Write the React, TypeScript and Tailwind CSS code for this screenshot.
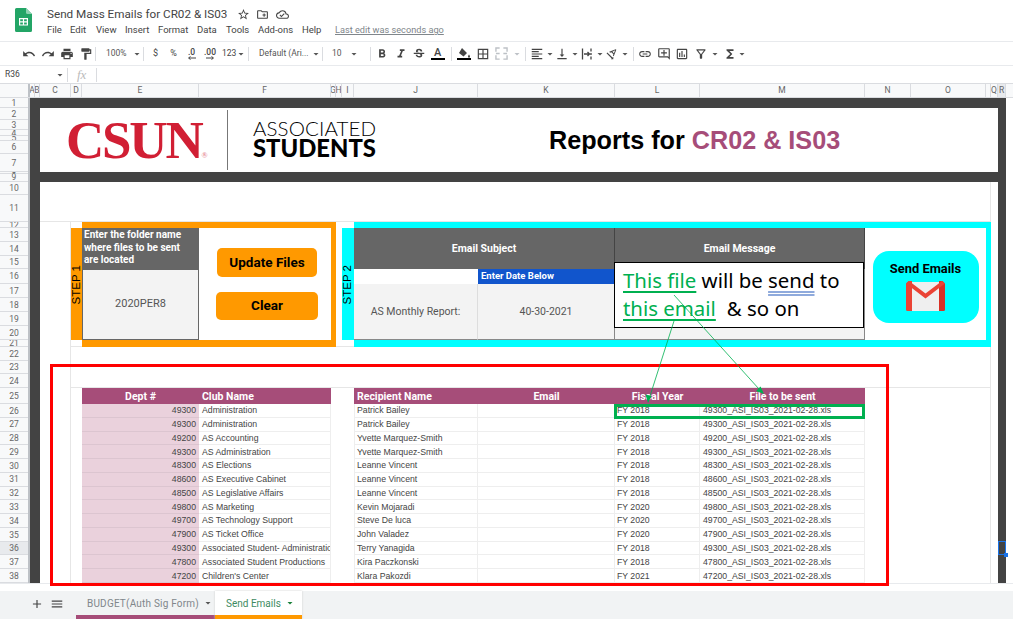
import {
  MdAdd,
  MdArrowDropDown,
  MdFormatAlignLeft,
  MdFormatBold,
  MdFormatItalic,
  MdFormatPaint,
  MdFunctions,
  MdLink,
  MdMenu,
  MdOutlineAddComment,
  MdOutlineBorderAll,
  MdOutlineCloudDone,
  MdOutlineCreateNewFolder,
  MdOutlineFilterAlt,
  MdOutlineInsertChart,
  MdPrint,
  MdRedo,
  MdStarBorder,
  MdStrikethroughS,
  MdTextRotationAngledown,
  MdUndo,
  MdVerticalAlignBottom,
} from 'react-icons/md';

const menu = [
  { label: 'File', width: 'w-[23px]' },
  { label: 'Edit', width: 'w-[26px]' },
  { label: 'View', width: 'w-[29px]' },
  { label: 'Insert', width: 'w-[33px]' },
  { label: 'Format', width: 'w-[39px]' },
  { label: 'Data', width: 'w-[29px]' },
  { label: 'Tools', width: 'w-[32px]' },
  { label: 'Add-ons', width: 'w-[44px]' },
  { label: 'Help', width: 'w-[33px]' },
];

const columns = [
  { label: 'A', width: 'w-[5px]' },
  { label: 'B', width: 'w-[5px]' },
  { label: 'C', width: 'w-[31px]' },
  { label: 'D', width: 'w-[11px]' },
  { label: 'E', width: 'w-[117px]' },
  { label: 'F', width: 'w-[132px]' },
  { label: 'G', width: 'w-[5px]' },
  { label: 'H', width: 'w-[6px]' },
  { label: 'I', width: 'w-[12px]' },
  { label: 'J', width: 'w-[124px]' },
  { label: 'K', width: 'w-[137px]' },
  { label: 'L', width: 'w-[85px]' },
  { label: 'M', width: 'w-[165px]' },
  { label: 'N', width: 'w-[46px]' },
  { label: 'O', width: 'w-[75px]' },
  { label: '', width: 'w-[5px]' },
  { label: 'Q', width: 'w-[7px]' },
  { label: 'R', width: 'w-[8px]' },
];

const rows = [
  { dept: 49300, club: 'Administration', name: 'Patrick Bailey', year: 'FY 2018' },
  { dept: 49300, club: 'Administration', name: 'Patrick Bailey', year: 'FY 2018' },
  { dept: 49200, club: 'AS Accounting', name: 'Yvette Marquez-Smith', year: 'FY 2018' },
  { dept: 49300, club: 'AS Administration', name: 'Yvette Marquez-Smith', year: 'FY 2018' },
  { dept: 48300, club: 'AS Elections', name: 'Leanne Vincent', year: 'FY 2018' },
  { dept: 48600, club: 'AS Executive Cabinet', name: 'Leanne Vincent', year: 'FY 2018' },
  { dept: 48500, club: 'AS Legislative Affairs', name: 'Leanne Vincent', year: 'FY 2018' },
  { dept: 49800, club: 'AS Marketing', name: 'Kevin Mojaradi', year: 'FY 2020' },
  { dept: 49700, club: 'AS Technology Support', name: 'Steve De luca', year: 'FY 2020' },
  { dept: 47900, club: 'AS Ticket Office', name: 'John Valadez', year: 'FY 2020' },
  { dept: 49300, club: 'Associated Student- Administration', name: 'Terry Yanagida', year: 'FY 2018' },
  { dept: 47800, club: 'Associated Student Productions', name: 'Kira Paczkonski', year: 'FY 2018' },
  { dept: 47200, club: "Children's Center", name: 'Klara Pakozdi', year: 'FY 2021' },
];

const gridCols =
  'grid-cols-[5px_5px_31px_11px_117px_132px_5px_6px_12px_124px_137px_85px_165px_46px_75px_5px_7px_8px]';
const gridRows =
  'grid-rows-[10px_12px_10px_6px_5px_13px_18px_1px_9px_13px_27px_6px_14px_14px_13px_15px_14px_14px_14px_14px_7px_14px_13px_14px_16px_repeat(13,13.77px)]';

function Caret({ className = '' }: { className?: string }) {
  return <MdArrowDropDown className={`shrink-0 text-[12px] text-[#555] ${className}`} />;
}

function Sep({ className = '' }: { className?: string }) {
  return <div className={`h-[14px] w-px shrink-0 bg-[#dadce0] ${className}`} />;
}

function Tool({ children, className = 'w-[19px]' }: { children: React.ReactNode; className?: string }) {
  return <div className={`flex h-full shrink-0 items-center justify-center text-[14px] text-[#444] ${className}`}>{children}</div>;
}

function SheetsLogo() {
  return (
    <svg viewBox="0 0 17 24" className="h-[24px] w-[17px]">
      <path d="M1.5 0H11l6 6v16.5a1.5 1.5 0 0 1-1.5 1.5h-14A1.5 1.5 0 0 1 0 22.500V1.500A1.500 1.500 0 0 1 1.500 0z" fill="#23a566" />
      <path d="M11 0l6 6h-4.500A1.500 1.500 0 0 1 11 4.500z" fill="#8ed1b1" />
      <path d="M4 10h9v7.500H4zm1.200 1.200v2h2.700v-2zm3.900 0v2h2.700v-2zm-3.900 3.200v2h2.700v-2zm3.900 0v2h2.700v-2z" fill="#fff" fillRule="evenodd" />
    </svg>
  );
}

function GmailIcon() {
  return (
    <svg viewBox="0 0 39 30" className="h-[30px] w-[39px]">
      <rect x="2" y="1" width="35" height="29" fill="#efefef" />
      <path d="M0 2.500L2.500 0H6v30H1.500A1.500 1.500 0 0 1 0 28.500z" fill="#ea4335" />
      <path d="M39 2.500L36.500 0H33v30h4.500a1.500 1.500 0 0 0 1.500-1.500z" fill="#d93025" />
      <path d="M0 2.500L3 0l16.500 12.500L36 0l3 2.500-19.500 15z" fill="#ea4335" />
    </svg>
  );
}

// little arrow under the decimal buttons
function DecimalArrow({ flip = false }: { flip?: boolean }) {
  return (
    <svg viewBox="0 0 9 4" className={`-mt-[1px] h-[4px] w-[9px] ${flip ? '-scale-x-100' : ''}`}>
      <path d="M9 2H2M3.500 .5L1.500 2l2 1.500" stroke="#444" strokeWidth="1" fill="none" />
    </svg>
  );
}

function Toolbar() {
  return (
    <div className="flex h-[25px] items-center border-y border-[#e8eaed] pl-[19px] font-['Roboto',sans-serif] text-[8.5px] text-[#555]">
      <Tool><MdUndo /></Tool>
      <Tool><MdRedo /></Tool>
      <Tool><MdPrint /></Tool>
      <Tool><MdFormatPaint /></Tool>
      <Sep />
      <div className="flex w-[47px] shrink-0 items-center pl-[10px]">
        <span className="w-[25px]">100%</span>
        <Caret />
      </div>
      <Sep />
      <Tool className="ml-[2px] w-[19px]">
        <span className="text-[9px]">$</span>
      </Tool>
      <Tool className="w-[17px]">
        <span className="text-[9px]">%</span>
      </Tool>
      <Tool className="w-[19px]">
        <div className="flex flex-col items-center leading-none">
          <span className="text-[8.500px] font-medium leading-[9px]">.0</span>
          <DecimalArrow />
        </div>
      </Tool>
      <Tool className="w-[18px]">
        <div className="flex flex-col items-center leading-none">
          <span className="text-[8.500px] font-medium leading-[9px]">.00</span>
          <DecimalArrow flip />
        </div>
      </Tool>
      <Tool className="w-[26px] !justify-start pl-[3px]">
        <span className="text-[8.500px]">123</span>
        <Caret className="-ml-px" />
      </Tool>
      <Sep className="ml-[3px]" />
      <div className="flex w-[73px] shrink-0 items-center pl-[10px]">
        <span className="w-[52px] whitespace-nowrap">Default (Ari...</span>
        <Caret />
      </div>
      <Sep />
      <div className="flex w-[47px] shrink-0 items-center pl-[9px]">
        <span className="w-[15px]">10</span>
        <Caret className="translate-x-[1px]" />
      </div>
      <Sep />
      <Tool className="ml-[2px] w-[18.5px]"><MdFormatBold /></Tool>
      <Tool className="w-[18.5px]"><MdFormatItalic /></Tool>
      <Tool className="w-[18.5px]"><MdStrikethroughS /></Tool>
      <Tool className="w-[18.5px]">
        <div className="flex flex-col items-center leading-none">
          <span className="text-[11px] font-medium leading-[11px]">A</span>
          <div className="h-[2px] w-[14px] bg-black" />
        </div>
      </Tool>
      <Sep className="ml-[4px]" />
      <Tool className="ml-[2px] w-[19px]">
        <div className="flex flex-col items-center">
          <svg viewBox="0 0 14 11" className="h-[11px] w-[14px]">
            <path d="M5 1l5 5-3.500 3.500L2 6zM12 7.500c.8 1.200 1 1.700 1 2.200a1 1 0 0 1-2 0c0-.5.2-1 1-2.200z" fill="#444" />
          </svg>
          <div className="h-[2px] w-[14px] bg-black" />
        </div>
      </Tool>
      <Tool><MdOutlineBorderAll /></Tool>
      <Tool className="w-[19px] text-[#bdc1c6]">
        <svg viewBox="0 0 14 14" className="h-[13px] w-[13px]" fill="none" stroke="#bdc1c6" strokeWidth="1.500">
          <path d="M1 5V1h4M9 1h4v4M1 9v4h4M9 13h4V9M1 7h4M9 7h4" />
        </svg>
      </Tool>
      <Tool className="w-[12px]"><Caret className="text-[#bdc1c6]" /></Tool>
      <Sep className="ml-[2px]" />
      <div className="flex w-[25px] shrink-0 items-center pl-[4px] text-[14px] text-[#444]"><MdFormatAlignLeft className="shrink-0" /><Caret /></div>
      <div className="flex w-[25px] shrink-0 items-center pl-[4px] text-[14px] text-[#444]"><MdVerticalAlignBottom className="shrink-0" /><Caret /></div>
      <div className="flex w-[25px] shrink-0 items-center pl-[4px] text-[14px] text-[#444]">
        <svg viewBox="0 0 14 14" className="h-[14px] w-[14px] shrink-0" fill="none" stroke="#444" strokeWidth="1.300">
          <path d="M2.500 1.500v11M11 1.500v3M11 6v2M11 9.500v3M4 7h5.500M7.500 5l2 2-2 2" />
        </svg>
        <Caret />
      </div>
      <div className="flex w-[25px] shrink-0 items-center pl-[4px] text-[14px] text-[#444]"><MdTextRotationAngledown className="shrink-0" /><Caret /></div>
      <Sep className="ml-[7px]" />
      <Tool className="ml-[2px] w-[18.5px]"><MdLink /></Tool>
      <Tool className="w-[18.5px]"><MdOutlineAddComment /></Tool>
      <Tool className="w-[18.5px]"><MdOutlineInsertChart /></Tool>
      <Tool className="w-[18.5px]"><MdOutlineFilterAlt /></Tool>
      <Tool className="w-[10px]"><Caret /></Tool>
      <Tool className="ml-[2px] w-[15px]"><MdFunctions /></Tool>
      <Tool className="w-[10px]"><Caret /></Tool>
    </div>
  );
}

function RowHeaders() {
  return (
    <div className={`grid w-[30px] shrink-0 border-r-[2px] border-[#bdc1c6] bg-[#f8f9fa] ${gridRows}`}>
      {Array.from({ length: 38 }, (_, i) => (
        <div
          key={i}
          className={`flex items-center justify-center overflow-hidden border-b border-[#dadce0] pt-px text-[8.5px] leading-none text-[#666] ${
            i === 35 ? 'bg-[#e8eaed]' : ''
          }`}
        >
          {i + 1}
        </div>
      ))}
    </div>
  );
}

function Sheet() {
  return (
    <div className={`grid shrink-0 bg-white ${gridCols} ${gridRows} font-['Liberation_Sans',sans-serif]`}>
      {/* gridlines */}
      <div className="col-[3/4] row-[12/-1] border-r border-[#e6e6e6]" />
      <div className="col-[3/17] row-[11] border-b border-[#e6e6e6]" />
      <div className="col-[4/17] row-[21] border-b border-[#e6e6e6]" />
      <div className="col-[4/17] row-[24] border-b border-[#e6e6e6]" />
      <div className="col-[16] row-[10/-1] border-r border-[#e6e6e6]" />

      {/* dark frame */}
      <div className="col-[1/3] row-[1/-1] bg-[#434343]" />
      <div className="col-[18] row-[1/-1] bg-[#434343]" />
      <div className="col-[1/-1] row-[1] bg-[#434343]" />
      <div className="col-[1/-1] row-[8/10] bg-[#434343]" />

      {/* banner */}
      <div className="col-[3/18] row-[2/8] flex items-center overflow-hidden">
        <span className="ml-[26px] w-[161px] shrink-0 whitespace-nowrap font-['Liberation_Serif',serif] text-[53px] font-bold leading-none tracking-[-2.2px] text-[#d11f34]">
          CSUN<span className="text-[8px] tracking-normal text-[#e8909b]">®</span>
        </span>
        <div className="h-[60px] w-px shrink-0 bg-[#777]" />
        <div className="ml-[25px] mt-[-3px] flex w-[124px] shrink-0 flex-col font-['Lato',sans-serif] leading-none text-black">
          <span className="whitespace-nowrap text-[20.500px] font-light leading-[19px] tracking-[0.1px]">ASSOCIATED</span>
          <span className="whitespace-nowrap text-[23.800px] font-black leading-[21px]">STUDENTS</span>
        </div>
        <span className="ml-[172px] mt-[2px] whitespace-nowrap font-['Liberation_Sans',sans-serif] text-[25.200px] font-bold text-black">
          Reports for <span className="text-[#a64d79]">CR02 &amp; IS03</span>
        </span>
      </div>

      {/* step 1 */}
      <div className="col-[4] row-[13/21] flex items-center justify-center bg-[#ff9900] pb-px text-[11.500px] text-black">
        <span className="rotate-180 whitespace-nowrap pb-[2px] [writing-mode:vertical-rl]">STEP 1</span>
      </div>
      <div className="col-[5/8] row-[12] bg-[#ff9900]" />
      <div className="col-[5/8] row-[21] bg-[#ff9900]" />
      <div className="col-[7] row-[13/21] bg-[#ff9900]" />
      <div className="col-[5] row-[13/16] bg-[#666666] pl-[2px] pt-[1px] font-['Roboto',sans-serif] text-[10px] font-bold leading-[12.500px] text-white">
        Enter the folder name
        <br />
        where files to be sent
        <br />
        are located
      </div>
      <div className="col-[5] row-[16/21] flex items-center justify-center border border-[#666] bg-[#f3f3f3] font-['Roboto',sans-serif] text-[11px] text-[#555]">
        2020PER8
      </div>
      <div className="col-[6] row-[13/21] flex flex-col items-center justify-center gap-[15px] pb-[1px] pl-[4px] font-['Roboto',sans-serif] text-[13.500px] font-bold text-black">
        <div className="flex h-[29px] w-[100px] items-center justify-center rounded-[5px] bg-[#ff9900]">Update Files</div>
        <div className="flex h-[28px] w-[102px] items-center justify-center rounded-[5px] bg-[#ff9900]">Clear</div>
      </div>

      {/* step 2 */}
      <div className="col-[9] row-[13/21] flex items-center justify-center bg-[#00ffff] text-[11.500px] text-black">
        <span className="rotate-180 whitespace-nowrap pb-[2px] [writing-mode:vertical-rl]">STEP 2</span>
      </div>
      <div className="col-[10/17] row-[12] bg-[#00ffff]" />
      <div className="col-[10/17] row-[21] bg-[#00ffff]" />
      <div className="col-[16] row-[13/21] bg-[#00ffff]" />
      <div className="col-[10/12] row-[13/16] flex items-center justify-center border-r border-[#444] bg-[#666666] pt-px font-['Roboto',sans-serif] text-[10.500px] font-bold text-white">
        Email Subject
      </div>
      <div className="col-[12/14] row-[13/16] flex items-center justify-center border-r border-[#444] bg-[#666666] pt-px font-['Roboto',sans-serif] text-[10.500px] font-bold text-white">
        Email Message
      </div>
      <div className="col-[10] row-[16] bg-white" />
      <div className="col-[11] row-[16] flex items-center bg-[#1155cc] pl-[3px] font-['Roboto',sans-serif] text-[9.500px] font-bold text-white">
        Enter Date Below
      </div>
      <div className="col-[10] row-[17/21] flex items-center justify-center border-b border-[#888] border-r border-r-[#ddd] bg-[#f3f3f3] font-['Roboto',sans-serif] text-[10.500px] text-[#555]">
        AS Monthly Report:
      </div>
      <div className="col-[11] row-[17/21] flex items-center justify-center border-b border-r border-[#888] bg-[#f3f3f3] font-['Roboto',sans-serif] text-[10.500px] text-[#555]">
        40-30-2021
      </div>
      <div className="col-[12/14] row-[16/21] border-b border-r border-[#888] bg-[#f3f3f3]" />
      <div className="col-[14/16] row-[13/21] flex items-center justify-center pt-[5px]">
        <div className="flex h-[72px] w-[106px] flex-col items-center rounded-[16px] bg-[#00ffff] pt-[10px] font-['Roboto',sans-serif] text-[12.900px] font-bold leading-[15px] text-black">
          Send Emails
          <div className="mt-[5px]">
            <GmailIcon />
          </div>
        </div>
      </div>

      {/* tables */}
      <div className="col-[5/7] row-[25/-1] grid grid-cols-subgrid grid-rows-subgrid text-[8.700px] text-[#444]">
        <div className="flex items-center justify-center bg-[#a64d79] pt-px font-['Roboto',sans-serif] text-[10.500px] font-bold text-white">Dept #</div>
        <div className="flex items-center bg-[#a64d79] pl-[3px] pt-px font-['Roboto',sans-serif] text-[10.500px] font-bold text-white">Club Name</div>
        {rows.map((row, i) => [
          <div key={`d${i}`} className="flex items-center justify-end border-b border-[#dcc5d0] bg-[#ead1dc] pr-[3px] pt-px">{row.dept}</div>,
          <div key={`c${i}`} className="flex items-center overflow-hidden whitespace-nowrap border-b border-r border-[#eeeeee] pl-[3px] pt-px">{row.club}</div>,
        ])}
      </div>
      <div className="col-[10/14] row-[25/-1] grid grid-cols-subgrid grid-rows-subgrid text-[8.700px] text-[#444]">
        <div className="flex items-center bg-[#a64d79] pl-[3px] pt-px font-['Roboto',sans-serif] text-[10.500px] font-bold text-white">Recipient Name</div>
        <div className="flex items-center justify-center bg-[#a64d79] pt-px font-['Roboto',sans-serif] text-[10.500px] font-bold text-white">Email</div>
        <div className="flex items-center justify-center bg-[#a64d79] pt-px font-['Roboto',sans-serif] text-[10.500px] font-bold text-white">Fiscal Year</div>
        <div className="flex items-center justify-center bg-[#a64d79] pt-px font-['Roboto',sans-serif] text-[10.500px] font-bold text-white">File to be sent</div>
        {rows.map((row, i) => [
          <div key={`n${i}`} className="flex items-center border-b border-l border-r border-[#eeeeee] pl-[2px] pt-px">{row.name}</div>,
          <div key={`e${i}`} className="border-b border-r border-[#eeeeee]" />,
          <div key={`y${i}`} className="flex items-center border-b border-r border-[#eeeeee] pl-[2px] pt-px">{row.year}</div>,
          <div key={`f${i}`} className="flex items-center border-b border-r border-[#eeeeee] pl-[3px] pt-px">{row.dept}_ASI_IS03_2021-02-28.xls</div>,
        ])}
      </div>
    </div>
  );
}

export default function App() {
  return (
    <div className="relative flex h-[619px] w-[1013px] flex-col overflow-hidden bg-white font-['Roboto',sans-serif]">
      <header className="flex h-[41px] shrink-0">
        <div className="w-[47px] pl-[15px] pt-[8px]">
          <SheetsLogo />
        </div>
        <div className="flex flex-col">
          <div className="flex h-[23px] items-end text-[#444]">
            <span className="w-[189px] whitespace-nowrap text-[11.700px] leading-[18px]">Send Mass Emails for CR02 &amp; IS03</span>
            <MdStarBorder className="mb-[2px] ml-[1px] text-[13px]" />
            <MdOutlineCreateNewFolder className="mb-[2px] ml-[6px] text-[13px]" />
            <MdOutlineCloudDone className="mb-[2px] ml-[7px] text-[13px]" />
          </div>
          <div className="flex items-center text-[9.500px] leading-[14px] text-[#444]">
            {menu.map((item) => (
              <span key={item.label} className={item.width}>{item.label}</span>
            ))}
            <span className="whitespace-nowrap text-[9.200px] text-[#80868b] underline">Last edit was seconds ago</span>
          </div>
        </div>
      </header>

      <Toolbar />

      {/* name box + formula bar */}
      <div className="flex h-[17px] shrink-0 items-center text-[8.500px] text-[#444]">
        <span className="w-[56px] pl-[5px]">R36</span>
        <Caret className="-ml-[2px]" />
        <Sep className="ml-[1px]" />
        <span className="ml-[9px] w-[19px] font-['Liberation_Serif',serif] text-[13px] italic text-[#bbb]">fx</span>
        <Sep />
      </div>

      {/* column letters */}
      <div className="flex h-[15px] shrink-0 border-y border-[#dadce0] bg-[#f8f9fa] text-[8.500px] text-[#666]">
        <div className="w-[30px] border-r-[2px] border-[#bdc1c6]" />
        {columns.map((col) => (
          <div
            key={col.width + col.label}
            className={`flex shrink-0 items-center justify-center overflow-hidden border-r border-[#dadce0] ${col.width} ${
              col.label === 'R' ? 'bg-[#e8eaed]' : ''
            }`}
          >
            {col.label}
          </div>
        ))}
      </div>

      <div className="flex h-[485px] shrink-0 items-start">
        <RowHeaders />
        <Sheet />
      </div>
      <div className="h-[8px] shrink-0 border-t border-[#e8eaed]" />

      {/* sheet tabs */}
      <div className="flex h-[28px] shrink-0 bg-[#f1f3f4] text-[10px]">
        <MdAdd className="ml-[30px] mt-[6px] text-[14px] text-[#444]" />
        <MdMenu className="ml-[6px] mt-[6px] text-[14px] text-[#444]" />
        <div className="ml-[12px] flex w-[139px] items-center whitespace-nowrap border-b-[4px] border-[#a64d79] pl-[11px] tracking-[0.2px] text-[#80868b]">
          BUDGET(Auth Sig Form)
          <Caret className="ml-[3px]" />
        </div>
        <div className="flex w-[87px] items-center whitespace-nowrap border-b-[4px] border-[#ff9900] bg-white pl-[11px] text-[#3d8a5f] shadow-[0_0_2px_#ccc]">
          Send Emails
          <Caret className="ml-[3px] text-[#188038]" />
        </div>
      </div>

      {/* annotations laid over the sheet */}
      <div className="absolute left-[50px] top-[364px] h-[222px] w-[839px] border-[3px] border-[#ff0000]" />
      <div className="absolute left-[614px] top-[404px] h-[15px] w-[251px] border-[3px] border-[#00b050]" />
      <div className="absolute left-[998px] top-[541px] h-[14px] w-[8px] border-[1.500px] border-[#1a73e8]">
        <div className="absolute -bottom-[3px] -right-[3px] h-[4px] w-[4px] bg-[#1a73e8]" />
      </div>
      <div className="absolute left-[614px] top-[262px] h-[66px] w-[250px] border border-black bg-white pl-[8px] pt-[3px] font-['Noto_Sans',sans-serif] text-[20.400px] leading-[28px] text-black">
        <div className="whitespace-nowrap">
          <span className="text-[#00b050] underline decoration-[#00b050] underline-offset-[3px]">This file</span> will be{' '}
          <span className="underline decoration-[#8faadc] decoration-double underline-offset-[3px]">send</span> to
        </div>
        <div className="whitespace-nowrap">
          <span className="text-[#00b050] underline decoration-[#00b050] underline-offset-[3px]">this email</span>
          <span className="ml-[11px]">&amp; so on</span>
        </div>
      </div>
      <svg className="pointer-events-none absolute left-0 top-0 h-[619px] w-[1013px]" viewBox="0 0 1013 619">
        <path d="M674 295L759 389M674 321L650 396" stroke="#00b050" strokeWidth="0.800" fill="none" />
        <path d="M764 394l-8-3 4.500-4.500zM648 403l-2.500-8.500 6 1.500z" fill="#00b050" />
      </svg>
    </div>
  );
}
